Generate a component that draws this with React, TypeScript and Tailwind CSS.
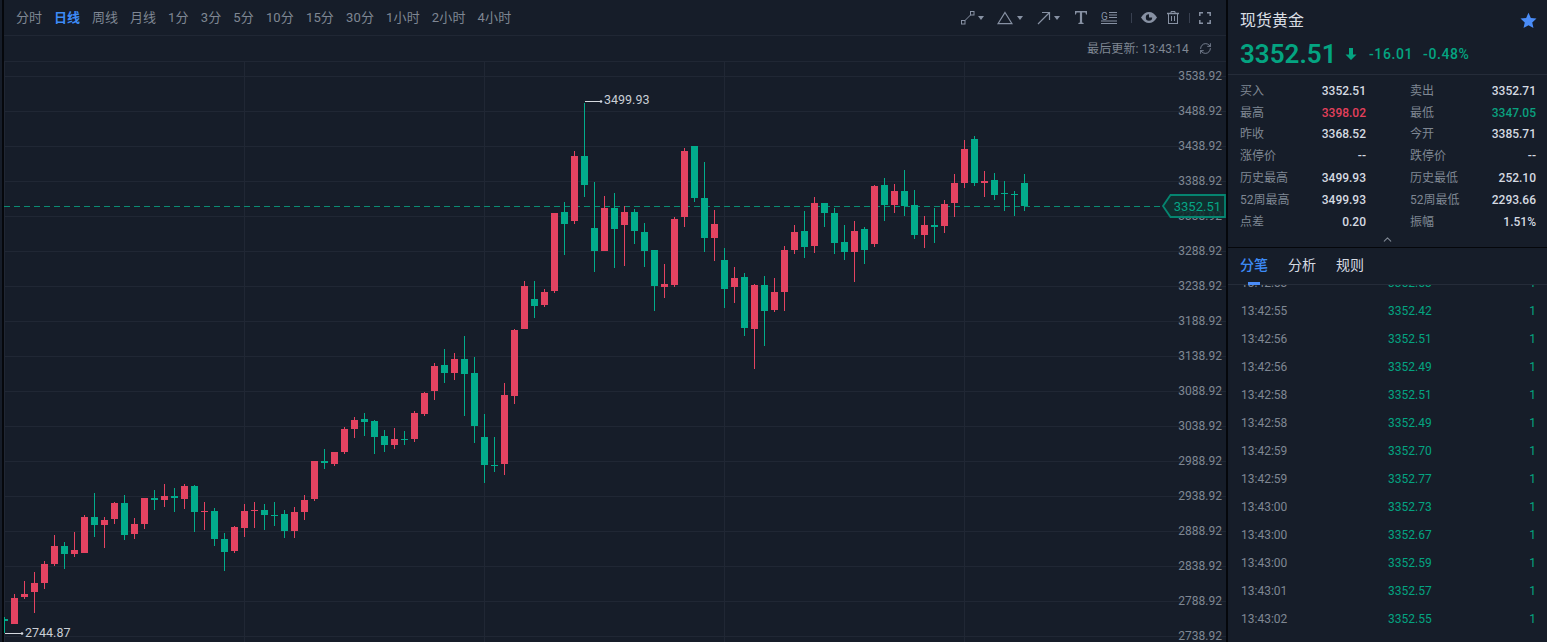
import React from "react";
import { RefreshCw, ChevronUp } from "lucide-react";

const G = "#02ab8b";
const R = "#e34361";

// [high, bodyTop, bodyBottom, low, colour] in page pixels, one candle every 10px from x=4
const C: [number, number, number, number, 0 | 1][] = [
  [617,619,621,633,0],[594,598,624,624,1],[581,594,597,599,1],[572,583,592,613,1],[561,564,583,589,1],
  [535,546,564,566,1],[542,546,554,569,0],[532,550,554,557,1],[515,517,553,553,1],[493,517,525,537,0],
  [517,520,525,548,1],[502,503,519,524,1],[495,503,535,540,0],[518,524,534,539,1],[498,498,524,529,1],
  [490,498,500,510,0],[484,496,500,507,1],[488,496,498,512,0],[484,486,499,509,1],[485,486,512,532,0],
  [502,511,512,530,1],[508,511,539,546,0],[533,539,552,571,0],[526,527,551,553,1],[504,511,528,537,1],
  [502,510,511,528,1],[504,510,515,530,0],[502,515,516,526,0],[510,514,531,538,0],[507,512,531,538,1],
  [495,500,512,520,1],[461,461,499,501,1],[449,461,463,469,0],[452,452,464,466,1],[427,429,452,454,1],
  [417,420,429,438,1],[413,419,422,436,0],[420,421,437,454,0],[430,436,445,452,0],[428,439,445,449,1],
  [431,439,440,445,0],[411,413,439,442,1],[392,393,414,416,1],[363,366,391,400,1],[349,365,373,383,0],
  [353,359,373,380,1],[336,359,374,416,0],[357,373,426,443,0],[414,437,465,483,0],[437,465,466,472,0],
  [383,395,464,475,1],[329,330,396,404,1],[281,286,329,329,1],[281,299,306,318,0],[289,292,305,307,1],
  [213,213,291,293,1],[202,212,224,255,0],[151,156,221,224,1],[103,156,185,197,0],[182,228,251,272,0],
  [196,208,251,251,1],[193,208,229,268,0],[206,212,225,266,1],[209,212,231,244,0],[223,232,251,267,0],
  [250,250,286,311,0],[264,284,287,298,1],[217,219,285,287,1],[148,151,217,227,1],[146,146,198,202,0],
  [162,198,238,252,0],[210,224,238,261,1],[248,260,289,308,0],[267,278,287,303,1],[273,277,328,336,0],
  [284,285,329,369,1],[276,285,311,346,0],[278,292,310,312,1],[246,250,292,311,1],[225,232,250,254,1],
  [211,231,247,258,0],[197,203,246,253,1],[203,203,213,227,0],[208,213,243,254,0],[225,242,252,260,0],
  [221,231,252,282,1],[227,229,250,264,0],[185,186,244,247,1],[178,185,205,221,0],[184,191,205,213,1],
  [170,191,206,216,0],[190,205,235,239,0],[216,225,235,248,1],[208,225,227,243,0],[200,204,226,233,1],
  [174,183,203,217,1],[140,149,183,188,1],[136,139,183,186,0],[171,181,183,197,1],[173,180,195,200,0],
  [181,193,194,211,0],[191,194,195,216,0],[174,183,206,211,0],
];

const periods = ["分时","日线","周线","月线","1分","3分","5分","10分","15分","30分","1小时","2小时","4小时"];

const stats: [string,string,string,string,string?,string?][] = [
  ["买入","3352.51","卖出","3352.71"],
  ["最高","3398.02","最低","3347.05","text-[#e4405c]","text-[#0aa17f]"],
  ["昨收","3368.52","今开","3385.71"],
  ["涨停价","--","跌停价","--"],
  ["历史最高","3499.93","历史最低","252.10"],
  ["52周最高","3499.93","52周最低","2293.66"],
  ["点差","0.20","振幅","1.51%"],
];

const ticks: [string,string][] = [
  ["13:42:53","3352.53"],["13:42:55","3352.42"],["13:42:56","3352.51"],["13:42:56","3352.49"],
  ["13:42:58","3352.51"],["13:42:58","3352.49"],["13:42:59","3352.70"],["13:42:59","3352.77"],
  ["13:43:00","3352.73"],["13:43:00","3352.67"],["13:43:00","3352.59"],["13:43:01","3352.57"],
  ["13:43:02","3352.55"],["13:43:02","3352.41"],
];

const Caret = ({ className = "" }: { className?: string }) => (
  <svg width="6" height="4" viewBox="0 0 6 4" className={className}><path d="M0 0h6L3 4z" fill="#8791a3" /></svg>
);

function Tools() {
  const s = "#8791a3";
  return (
    <div className="flex items-center pr-[15px]">
      <svg width="14" height="14" viewBox="0 0 14 14" fill="none" stroke={s}>
        <rect x="0.5" y="9.5" width="3.5" height="3.5" /><rect x="9.5" y="0.5" width="3.5" height="3.5" /><path d="M4 9.5 9.5 4" />
      </svg>
      <Caret className="ml-[3px]" />
      <svg width="16" height="14" viewBox="0 0 16 14" fill="none" stroke={s} strokeWidth="1.2" className="ml-[13px]">
        <path d="M8 1.5 15 12.7H1z" />
      </svg>
      <Caret className="ml-[4px]" />
      <svg width="14" height="14" viewBox="0 0 14 14" fill="none" stroke={s} strokeWidth="1.2" className="ml-[14px]">
        <path d="M1 13 12.5 1.5M5 1.5h7.5V9" />
      </svg>
      <Caret className="ml-[3px]" />
      <svg width="12" height="13" viewBox="0 0 12 13" className="ml-[15px]" fill={s}>
        <path d="M0 0h12v3.4h-1L10.4 1.6H7.1v9.9l1.5.5v1H3.4v-1l1.5-.5V1.6H1.6L1 3.4H0z" />
      </svg>
      <svg width="16" height="14" viewBox="0 0 16 14" className="ml-[14px]" fill={s}>
        <text x="0" y="8.5" fontSize="10" fontFamily="Roboto" fill={s}>G</text>
        <rect x="8" y="1" width="8" height="1" /><rect x="8" y="3.5" width="8" height="1" /><rect x="8" y="6" width="8" height="1" />
        <rect x="0" y="9.5" width="16" height="1" /><rect x="0" y="12" width="16" height="1" />
      </svg>
      <div className="ml-[14px] h-[10px] w-px bg-[#384050]" />
      <svg width="16" height="11" viewBox="0 0 16 11" className="ml-[9px]">
        <path d="M0 5.5C2.5 1.5 5 0 8 0s5.500 1.500 8 5.500C13.500 9.500 11 11 8 11S2.500 9.500 0 5.500z" fill={s} />
        <path d="M8 2.300a3.200 3.200 0 1 0 3.200 3.200H8z" fill="#161d29" />
      </svg>
      <svg width="12" height="13" viewBox="0 0 12 13" className="ml-[10px]" fill="none" stroke={s}>
        <path d="M0 2.500h12" strokeWidth="1.500" /><path d="M4 2V.5h4V2" /><rect x="1.500" y="2.500" width="9" height="10" />
        <path d="M4.500 5v5M7.500 5v5" />
      </svg>
      <div className="ml-[10px] h-[10px] w-px bg-[#384050]" />
      <svg width="12" height="12" viewBox="0 0 12 12" className="ml-[9px]" fill="none" stroke={s} strokeWidth="1.500">
        <path d="M.8 4V.8H4M8 .8h3.200V4M11.200 8v3.200H8M4 11.200H.8V8" />
      </svg>
    </div>
  );
}

function Chart() {
  const levels = Array.from({ length: 17 }, (_, i) => i);
  return (
    <svg viewBox="4 62 1222 580" className="block h-[580px] w-[1222px]" shapeRendering="crispEdges">
      {levels.map((i) => <rect key={i} x="4" y={76 + 35 * i} width="1222" height="1" fill="#202734" />)}
      {[4, 244, 484, 724, 964].map((x) => <rect key={x} x={x} y="62" width="1" height="580" fill="#202734" />)}
      <line x1="4" y1="206.500" x2="1163" y2="206.500" stroke="#0b8a72" strokeDasharray="6 4" />
      {C.map(([h, t, b, l, up], i) => {
        const x = 4 + 10 * i;
        const f = up ? R : G;
        return (
          <g key={i} fill={f}>
            <rect x={x} y={h} width="1" height={l - h} />
            <rect x={x - 3} y={t} width="7" height={Math.max(b - t, 1)} />
          </g>
        );
      })}
      <g shapeRendering="auto" fontFamily="Roboto, sans-serif" fontSize="12">
        {levels.map((i) => (
          <text key={i} x="1222" y={80 + 35 * i} textAnchor="end" fill="#7f8793">{(3538.92 - 50 * i).toFixed(2)}</text>
        ))}
        <path d="M1170.500 195H1225V217H1170.500L1163 206z" fill="#103130" fillOpacity="0.88" stroke="#058570" strokeWidth="1.800" />
        <text x="1221" y="211" textAnchor="end" fontSize="13" fill="#06a585">3352.51</text>
        <path d="M585 101.500H600" stroke="#d5d9df" />
        <circle cx="601" cy="101.500" r="1.300" fill="#d5d9df" />
        <text x="604" y="104" fontSize="12.500" fill="#c9ced5">3499.93</text>
        <path d="M5 633.500H21" stroke="#d5d9df" />
        <circle cx="22" cy="633.500" r="1.300" fill="#d5d9df" />
        <text x="25" y="637" fontSize="12.500" fill="#c9ced5">2744.87</text>
      </g>
    </svg>
  );
}

export default function App() {
  return (
    <div className="flex h-[642px] w-[1547px] overflow-hidden bg-[#161d29] font-[Roboto,'Noto_Sans_CJK_SC',sans-serif] text-[12px] text-[#7f8793]">
      <div className="w-[2px] shrink-0" />
      <div className="w-[2px] shrink-0 bg-[#05070b]" />
      <main className="flex w-[1222px] shrink-0 flex-col">
        <div className="flex h-[36px] shrink-0 items-center justify-between border-b border-[#202734]">
          <div className="flex gap-[12px] pl-[12px] text-[13px]">
            {periods.map((p) => (
              <span key={p} className={p === "日线" ? "font-bold text-[#3d8bf6]" : /\d/.test(p) ? "tracking-[0.15px]" : ""}>{p}</span>
            ))}
          </div>
          <Tools />
        </div>
        <div className="flex h-[26px] shrink-0 items-center justify-end gap-[10px] border-b border-[#202734] pr-[14px]">
          <span className="tracking-[0.13px]">最后更新: 13:43:14</span>
          <RefreshCw size={13} strokeWidth={1.5} className="text-[#8791a3]" />
        </div>
        <Chart />
      </main>
      <div className="w-[2px] shrink-0 bg-[#05070b]" />
      <aside className="flex min-w-0 flex-1 flex-col">
        <div className="h-[248px] shrink-0 border-b border-[#05070b]">
          <div className="flex h-[75px] flex-col border-b border-[#252c39] pl-[12px] pr-[10px]">
            <div className="flex h-[40px] items-center justify-between pt-[1px]">
              <span className="text-[16px] leading-none text-[#d9dde3]">现货黄金</span>
              <svg width="17" height="17" viewBox="0 0 24 24" fill="#4a8cf7"><path d="M12 1l3.300 7.400 8 .9-6 5.400 1.700 7.900L12 18.600 5 22.600l1.700-7.900-6-5.400 8-.9z" /></svg>
            </div>
            <div className="flex items-center pt-[1px] font-medium text-[#04a481]">
              <span className="w-[96px] text-[26px] font-semibold leading-[26px]">3352.51</span>
              <svg width="12" height="14" viewBox="0 0 12 14" fill="#04a481" className="ml-[9px]"><path d="M4 1h4v6.500h3.500L6 13 .5 7.500H4z" /></svg>
              <span className="ml-[12px] text-[14px] tracking-[0.6px]">-16.01</span>
              <span className="ml-[10px] text-[14px] tracking-[0.6px]">-0.48%</span>
            </div>
          </div>
          <div className="grid grid-cols-[126px_126px] gap-x-[44px] pl-[12px] pt-[5px]">
            {stats.map(([a, b, c, d, e, f]) => (
              <React.Fragment key={a}>
                <div className="flex h-[21.8px] items-center justify-between">
                  <span>{a}</span><span className={`font-medium ${e ?? "text-[#d5dae1]"}`}>{b}</span>
                </div>
                <div className="flex h-[21.8px] items-center justify-between">
                  <span>{c}</span><span className={`font-medium ${f ?? "text-[#d5dae1]"}`}>{d}</span>
                </div>
              </React.Fragment>
            ))}
          </div>
          <div className="flex h-[14px] items-center justify-center">
            <ChevronUp size={13} strokeWidth={2} className="text-[#7f8793]" />
          </div>
        </div>
        <div className="relative flex h-[37px] shrink-0 items-center gap-[20px] border-b border-[#252c39] pb-[2px] pl-[12px] text-[14px] text-[#d5dae1]">
          <span className="font-medium text-[#3d8bf6]">分笔</span>
          <span>分析</span>
          <span>规则</span>
          <div className="absolute bottom-[-1px] left-[20px] h-[3px] w-[12px] bg-[#4a8cf7]" />
        </div>
        <div className="min-h-0 flex-1 overflow-hidden pl-[13px] pr-[11px]">
          <div className="mt-[-16px]">
            {ticks.map(([t, p], i) => (
              <div key={i} className="flex h-[28px] items-center">
                <span className="w-[147px]">{t}</span>
                <span className="flex-1 text-[#04a481]">{p}</span>
                <span className="text-[#04a481]">1</span>
              </div>
            ))}
          </div>
        </div>
      </aside>
    </div>
  );
}
